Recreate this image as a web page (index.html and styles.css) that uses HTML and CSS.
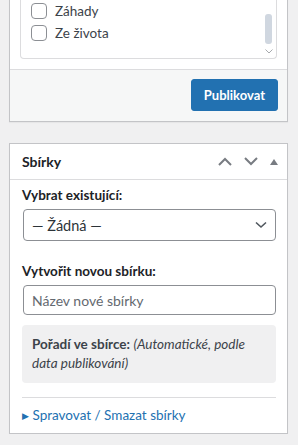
FILE: index.html
```html
<!DOCTYPE html>
<html lang="cs">
<head>
<meta charset="UTF-8" />
<title>Sbírky</title>
<link rel="stylesheet" href="styles.css">
</head>
<body>

<!-- Publikování / kategorie -->
<div class="postbox postbox-cats">
  <div class="cat-body">
    <div class="cat-list">
      <ul>
        <li><label><span class="check"></span>Záhady</label></li>
        <li><label><span class="check"></span>Ze života</label></li>
      </ul>
      <div class="scrollbar">
        <div class="thumb"></div>
        <svg class="scroll-arrow" width="8" height="5" viewBox="0 0 8 5"><path d="M0.5 0.5 L4 4 L7.5 0.5" fill="none" stroke="#a7aaad" stroke-width="1"/></svg>
      </div>
    </div>
  </div>
  <div class="actions">
    <button class="button-primary">Publikovat</button>
  </div>
</div>

<!-- Sbírky -->
<div class="postbox">
  <div class="postbox-header">
    <h2>Sbírky</h2>
    <div class="handles">
      <svg width="14" height="9" viewBox="0 0 14 9"><path d="M1 8 L7 2 L13 8" fill="none" stroke="#787c82" stroke-width="2"/></svg>
      <svg width="14" height="9" viewBox="0 0 14 9"><path d="M1 1 L7 7 L13 1" fill="none" stroke="#787c82" stroke-width="2"/></svg>
      <svg width="8" height="6" viewBox="0 0 8 6"><path d="M0 6 L4 0 L8 6 Z" fill="#787c82"/></svg>
    </div>
  </div>
  <div class="inside">
    <p class="field-label">Vybrat existující:</p>
    <div class="select">
      <span>— Žádná —</span>
      <svg width="12" height="8" viewBox="0 0 12 8"><path d="M1 1.5 L6 6 L11 1.5" fill="none" stroke="#50575e" stroke-width="1.6"/></svg>
    </div>

    <p class="field-label">Vytvořit novou sbírku:</p>
    <input class="text-input" type="text" placeholder="Název nové sbírky">

    <div class="order-note">
      <strong>Pořadí ve sbírce:</strong> <em>(Automatické, podle data publikování)</em>
    </div>

    <div class="manage">
      <span class="arrow">&#9654;</span> <a href="#">Spravovat / Smazat sbírky</a>
    </div>
  </div>
</div>

</body>
</html>
```

FILE: styles.css
```css
body {
  margin: 0;
  padding: 0 10px 0 9px;
  background: #f0f0f1;
  font-family: Lato, "Noto Sans", sans-serif;
  font-size: 13.5px;
  color: #1d2327;
  overflow: hidden;
}

.postbox {
  background: #fff;
  border: 1px solid #c3c4c7;
  box-shadow: 0 1px 1px rgba(0, 0, 0, 0.04);
}

.postbox-cats {
  margin-top: -30px;
  border-top: none;
  margin-bottom: 21px;
}

.cat-body {
  padding: 0 10px 10px;
}

.cat-list {
  border: 1px solid #dcdcde;
  border-top: none;
  border-radius: 0 0 4px 4px;
  height: 88px;
  position: relative;
}

.cat-list ul {
  list-style: none;
  margin: 0;
  padding: 30px 0 0 10px;
}

.cat-list li {
  height: 22px;
  display: flex;
  align-items: center;
}

.cat-list label {
  display: flex;
  align-items: center;
  gap: 8px;
  color: #3c434a;
  font-size: 13.5px;
}

.check {
  width: 14px;
  height: 14px;
  border: 1px solid #8c8f94;
  border-radius: 4px;
  background: #fff;
}

.scrollbar {
  position: absolute;
  right: 4px;
  top: 44px;
  width: 7px;
  height: 42px;
}

.thumb {
  width: 7px;
  height: 30px;
  background: #d0d7e0;
  border-radius: 3px;
}

.scroll-arrow {
  display: block;
  margin: 5px 0 0 0;
}

.actions {
  background: #f6f7f7;
  border-top: 1px solid #dcdcde;
  padding: 9px 9px 10px;
  display: flex;
  justify-content: flex-end;
}

.button-primary {
  background: #2271b1;
  border: 1px solid #2271b1;
  color: #fff;
  border-radius: 3px;
  font-family: inherit;
  font-size: 13px;
  font-weight: 700;
  height: 32px;
  padding: 0 12px;
}

.postbox-header {
  height: 35px;
  display: flex;
  align-items: center;
  justify-content: space-between;
  border-bottom: 1px solid #dcdcde;
  padding: 0 9px 0 12px;
}

.postbox-header h2 {
  margin: 0;
  font-size: 14px;
  font-weight: 700;
  color: #1d2327;
}

.handles {
  display: flex;
  align-items: center;
  gap: 12px;
}

.inside {
  padding: 5px 11px 0 12px;
}

.field-label {
  margin: 0 0 4px;
  font-weight: 700;
  color: #1d2327;
  line-height: 20px;
}

.select {
  margin-left: 1px;
  height: 30px;
  border: 1px solid #8c8f94;
  border-radius: 4px;
  display: flex;
  align-items: center;
  justify-content: space-between;
  padding: 0 8px 0 8px;
  color: #2c3338;
  font-size: 14.5px;
  margin-bottom: 20px;
}

.text-input {
  display: block;
  box-sizing: border-box;
  width: calc(100% - 1px);
  margin: 0 0 10px 1px;
  height: 30px;
  border: 1px solid #8c8f94;
  border-radius: 4px;
  padding: 0 8px;
  font-family: inherit;
  font-size: 14px;
}

.text-input::placeholder {
  color: #646970;
}

.order-note {
  background: #f0f0f1;
  border-radius: 4px;
  padding: 10px 10px;
  line-height: 19px;
  color: #3c434a;
}

.order-note strong {
  font-weight: 700;
}

.manage {
  margin-top: 14px;
  border-top: 1px solid #dcdcde;
  padding: 9px 0 10px;
}

.manage .arrow {
  color: #2271b1;
  font-size: 9px;
  vertical-align: 1px;
}

.manage a {
  color: #2271b1;
  text-decoration: none;
}
```
